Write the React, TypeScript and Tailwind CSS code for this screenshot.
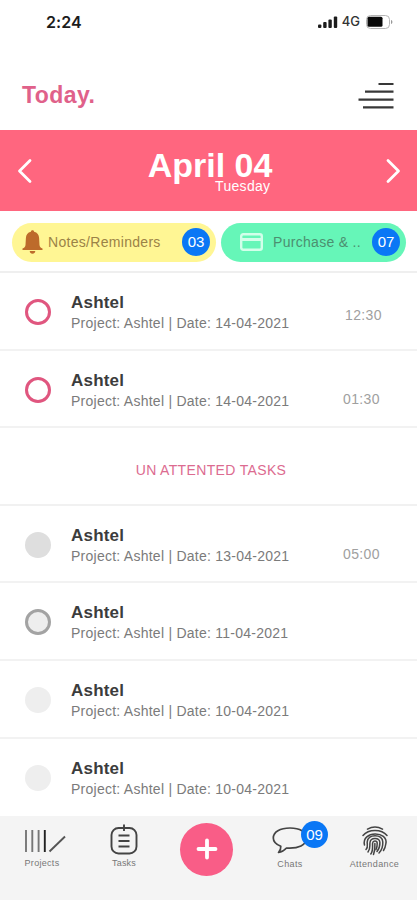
const tasks = [
  { date: "14-04-2021", time: "12:30", ring: "border-[3px] border-[#e0567f]", timePad: "mt-[32px] pr-[35px]" },
  { date: "14-04-2021", time: "01:30", ring: "border-[3px] border-[#e0567f]", timePad: "mt-[38px] pr-[37px]" },
]

const unattended = [
  { date: "13-04-2021", time: "05:00", ring: "bg-[#dedede]", timePad: "mt-[38px] pr-[37px]" },
  { date: "11-04-2021", time: "", ring: "border-[3px] border-[#a3a3a3] bg-[#eeeeee]", timePad: "" },
  { date: "10-04-2021", time: "", ring: "bg-[#eeeeee]", timePad: "" },
  { date: "10-04-2021", time: "", ring: "bg-[#eeeeee]", timePad: "" },
]

type Task = { date: string; time: string; ring: string; timePad: string }

function TaskRow({ date, time, ring, timePad }: Task) {
  return (
    <li className="flex h-[77.7px] border-b-2 border-[#f2f2f2] pl-[25px]">
      <div className={`mt-[26px] size-[26px] shrink-0 rounded-full ${ring}`} />
      <div className="ml-5 mt-5 whitespace-nowrap">
        <h3 className="text-[17px] leading-5 font-bold tracking-[0.2px] text-[#3c3c3c]">Ashtel</h3>
        <p className="text-sm leading-5 tracking-[0.25px] text-[#7b7b7b]">Project: Ashtel | Date: {date}</p>
      </div>
      {time && <span className={`ml-auto text-sm leading-5 tracking-[0.4px] text-[#a0a0a0] ${timePad}`}>{time}</span>}
    </li>
  )
}

export default function App() {
  return (
    <div className="flex h-[900px] w-full flex-col overflow-hidden bg-white font-['Liberation_Sans',Arial,sans-serif]">
      {/* Status bar */}
      <div className="flex h-11 items-center pl-[46px] pr-[24px]">
        <span className="font-['Inter',sans-serif] text-[16px] font-semibold tracking-[0.1px] text-[#1c1c1c]">2:24</span>
        <svg className="ml-auto" width="20" height="13" viewBox="0 0 20 13" fill="#1c1c1c">
          <rect x="0" y="8.5" width="3.4" height="3.5" rx="1" />
          <rect x="5.2" y="6" width="3.4" height="6" rx="1" />
          <rect x="10.4" y="3.5" width="3.4" height="8.5" rx="1" />
          <rect x="15.8" y="0.5" width="3.4" height="11.5" rx="1" />
        </svg>
        <span className="ml-1 font-['Inter',sans-serif] text-[13px] font-medium text-[#333]">4G</span>
        <svg className="ml-1.5" width="27" height="14" viewBox="0 0 27 14">
          <rect x="0.5" y="0.5" width="23" height="13" rx="4" fill="none" stroke="#b5b5b5" />
          <rect x="1.5" y="1.8" width="15" height="10" rx="1.5" fill="#0a0a0a" />
          <path d="M25 5v4c1-.4 1.4-1.1 1.4-2S26 5.400 25 5z" fill="#999" />
        </svg>
      </div>

      {/* Header */}
      <header className="flex h-[86px] items-center justify-between pl-[22px] pr-[23px]">
        <h1 className="mt-4 text-[23px] font-bold tracking-[0.45px] text-[#e0618a]">Today.</h1>
        <svg className="mt-[17px]" width="36" height="28" viewBox="0 0 36 28" stroke="#383838" strokeWidth="2.2">
          <path d="M20.500 2H35.500M7 9.600H35.500M0.500 17.600H35.500M5 25.300H35.500" />
        </svg>
      </header>

      {/* Date */}
      <section className="flex h-[81px] items-center justify-between bg-[#ff667f] pl-[17px] pr-4 text-white">
        <svg width="16" height="26" viewBox="0 0 16 26" fill="none" stroke="white" strokeWidth="2.8" strokeLinecap="round" strokeLinejoin="round">
          <path d="M13 2.500L2.500 13L13 23.500" />
        </svg>
        <div className="ml-0.5 flex flex-col items-end">
          <h2 className="text-[34px] leading-[34px] font-bold">April 04</h2>
          <span className="-mt-1 pr-[2px] text-sm leading-4 tracking-[0.3px]">Tuesday</span>
        </div>
        <svg width="16" height="26" viewBox="0 0 16 26" fill="none" stroke="white" strokeWidth="2.8" strokeLinecap="round" strokeLinejoin="round">
          <path d="M3 2.500L13.500 13L3 23.500" />
        </svg>
      </section>

      {/* Categories */}
      <section className="flex h-[62px] shrink-0 items-center gap-[5px] border-b-2 border-[#efefef] pl-3 pt-[2px]">
        <div className="flex h-[39px] w-[204px] items-center rounded-full bg-[#fff694] pl-[10px] pr-1.5">
          <svg width="21" height="24" viewBox="0 0 21 24" fill="#bd6b2b">
            <path d="M10.500 0.200c1 0 1.600.7 1.600 1.600 3.200.7 4.900 3 5 6.200L17.500 15c.2 1.800 1.200 2.800 3 3.500V20H.5v-1.500c1.800-.7 2.800-1.700 3-3.500L3.900 8c.1-3.200 1.800-5.500 5-6.200 0-.9.600-1.600 1.600-1.600zM7.700 21h5.600c-.2 1.700-1.200 2.800-2.800 2.800S7.900 22.700 7.700 21z" />
          </svg>
          <span className="ml-[5px] text-sm tracking-[0.3px] text-[#9b8247]">Notes/Reminders</span>
          <span className="ml-auto flex size-[28px] items-center justify-center rounded-full bg-[#0a77f5] text-[15px] text-white">03</span>
        </div>
        <div className="flex h-[39px] w-[185px] items-center rounded-full bg-[#66f6b8] pl-[19px] pr-1.5">
          <svg width="23" height="18" viewBox="0 0 23 18" fill="none" stroke="#d3ffea" strokeWidth="2.4">
            <rect x="1.200" y="1.200" width="20.600" height="15.600" rx="2" />
            <path d="M1 6.500H22" strokeWidth="3" />
          </svg>
          <span className="ml-[10px] text-sm tracking-[0.3px] text-[#4c8f70]">Purchase &amp; ..</span>
          <span className="ml-auto flex size-[28px] items-center justify-center rounded-full bg-[#0a77f5] text-[15px] text-white">07</span>
        </div>
      </section>

      {/* Tasks */}
      <ul className="shrink-0">
        {tasks.map((task, i) => (
          <TaskRow key={i} {...task} />
        ))}
      </ul>

      <div className="flex h-[77.2px] shrink-0 items-center justify-center border-b-2 border-[#f1f1f1] pl-[5px] pt-2">
        <h2 className="text-sm tracking-[0.35px] text-[#dc6b90]">UN ATTENTED TASKS</h2>
      </div>

      <ul className="shrink-0 [&>li:last-child]:border-b-0">
        {unattended.map((task, i) => (
          <TaskRow key={i} {...task} />
        ))}
      </ul>

      {/* Bottom nav */}
      <nav className="flex flex-1 bg-[#f4f4f4] text-[9px] leading-3 text-[#777]">
        <div className="ml-0.5 flex w-[82px] flex-col items-center pt-[13px]">
          <svg className="ml-1" width="42" height="24" viewBox="0 0 42 24" stroke="#555" strokeWidth="1.900">
            <path d="M2 1V23M8.300 1V23M14.600 1V23" stroke="#777" />
            <path d="M20.800 1V23" stroke="#222" />
            <path d="M25.500 22.500L41 7.500" />
          </svg>
          <span className="mt-[4px] -ml-0.5 tracking-[0.3px]">Projects</span>
        </div>
        <div className="flex w-[80px] flex-col items-center pt-[8px]">
          <svg width="28" height="32" viewBox="0 0 28 32" fill="none" stroke="#444" strokeWidth="1.900">
            <rect x="1.500" y="4" width="25" height="25.500" rx="7" />
            <path d="M14 0.500V7M8.500 11.500H19.500M8.500 17H19.500M8.500 22.500H19.500" />
          </svg>
          <span className="mt-px tracking-[0.2px]">Tasks</span>
        </div>
        <button className="ml-4 mt-[6.5px] flex size-[53px] items-center justify-center rounded-full bg-[#f95d87]">
          <svg width="22" height="22" viewBox="0 0 22 22" stroke="white" strokeWidth="3.800" strokeLinecap="round">
            <path d="M11 2.500V19.500M2.500 11H19.500" />
          </svg>
        </button>
        <div className="relative ml-[17px] flex w-[80px] flex-col items-center pt-[11px]">
          <svg width="36" height="27" viewBox="0 0 36 27" fill="none" stroke="#444" strokeWidth="1.700" strokeLinejoin="round">
            <path d="M18 1C8 1 1.300 5 1.300 11c0 4 3 6.500 7.500 8.300C9 22 8 24 6.500 25.500c4-.5 6-2.200 8-4.500 12 .8 20-3 20-10C34.500 5 28 1 18 1z" />
          </svg>
          <span className="mt-[4px] tracking-[0.4px]">Chats</span>
          <span className="absolute left-[51px] top-[5px] flex size-[27px] items-center justify-center rounded-full bg-[#0a77f5] text-[15px] text-white">09</span>
        </div>
        <div className="ml-0.5 flex flex-1 flex-col items-center pt-[10px]">
          <svg width="26" height="30" viewBox="0 0 26 30" fill="none" stroke="#444" strokeWidth="1.500" strokeLinecap="round">
            <path d="M5.500 3.200C10 0.700 16 0.700 20.500 3.200" />
            <path d="M1 9.500C6.500 2.700 19.500 2.700 25 9.500" />
            <path d="M2.500 19C-1 4.500 27 4.500 23.800 18C23.500 20.500 22.800 22.500 21.500 24.500" />
            <path d="M4 23.500C6.500 21 5 18.500 5.200 16C5.800 7.500 20.500 7.500 20.800 16C21 20.500 19.500 24.500 17 27" />
            <path d="M6 26C8.800 22.500 7.500 19.500 8 16.500C8.800 11 17.500 11.500 17.900 16.500C18 20 17 23 15 25.500" />
            <path d="M8.800 28C11.500 24.500 10.300 20.500 10.600 17C11 14.300 15 14.500 15.200 17C15.300 19.500 15 21.500 14 23.500" />
            <path d="M12.900 17.500C13.200 22 12.700 25.500 11.500 28.500" />
          </svg>
          <span className="mt-[2px] tracking-[0.4px]">Attendance</span>
        </div>
      </nav>
    </div>
  )
}
